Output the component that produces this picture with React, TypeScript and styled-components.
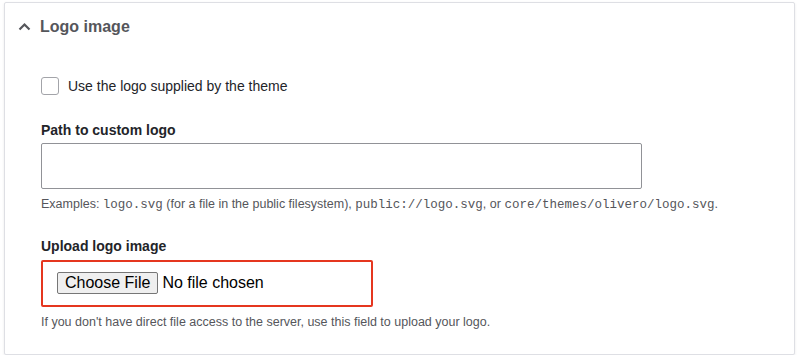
import React from "react";
import styled, { createGlobalStyle } from "styled-components";

const GlobalStyle = createGlobalStyle`
  body {
    margin: 0;
    background: #ffffff;
    font-family: "Liberation Sans", Arial, sans-serif;
    color: #232429;
  }
`;

const Page = styled.div`
  padding: 2px 5px 0 4px;
`;

const Panel = styled.section`
  border: 1px solid #dedfe4;
  border-radius: 2px;
  background: #ffffff;
  box-shadow: 0 1px 3px rgba(0, 0, 0, 0.08);
`;

const Summary = styled.div`
  display: flex;
  align-items: center;
  gap: 9px;
  height: 47px;
  padding-left: 13px;
  color: #55565b;
  font-size: 16px;
  font-weight: 700;
`;

const Content = styled.div`
  padding: 0 36px 24px;
`;

const CheckRow = styled.label`
  display: flex;
  align-items: center;
  gap: 9px;
  margin-top: 27px;
  height: 18px;
  font-size: 14px;
  color: #232429;
`;

const CheckBox = styled.span`
  width: 18px;
  height: 18px;
  box-sizing: border-box;
  border: 1px solid #a3a4a9;
  border-radius: 3px;
  background: #ffffff;
`;

const FormItem = styled.div<{ $top: number }>`
  margin-top: ${(p) => p.$top}px;
`;

const Label = styled.div<{ $gap: number }>`
  font-size: 14px;
  font-weight: 700;
  line-height: 18px;
  margin-bottom: ${(p) => p.$gap}px;
  color: #232429;
`;

const TextInput = styled.input`
  display: block;
  width: 601px;
  height: 46px;
  box-sizing: border-box;
  border: 1px solid #919297;
  border-radius: 2px;
  padding: 0 12px;
  font-size: 16px;
  font-family: inherit;
  outline: none;
`;

const FileInput = styled.input`
  display: block;
  width: 332px;
  height: 47px;
  box-sizing: border-box;
  border: 2px solid #e5361f;
  border-radius: 2px;
  padding: 10px 14px;
  font-size: 16px;
  font-family: "Liberation Sans", Arial, sans-serif;
  color: #000000;

  &::file-selector-button {
    font-family: inherit;
    font-size: 16px;
    margin-right: 4px;
    padding: 1px 7px;
    border: 1px solid #767676;
    border-radius: 2px;
    background: #efefef;
    color: #000000;
  }
`;

const Help = styled.div`
  margin-top: 7px;
  font-size: 12.5px;
  line-height: 16px;
  color: #55565b;
`;

const Code = styled.code`
  font-family: "Liberation Mono", "Courier New", monospace;
  font-size: 12.5px;
`;

const Chevron = () => (
  <svg width="13" height="9" viewBox="0 0 13 9">
    <polyline
      points="1.5,7.5 6.5,2.5 11.5,7.5"
      fill="none"
      stroke="#55565b"
      strokeWidth="2.2"
    />
  </svg>
);

export default function App() {
  return (
    <Page>
      <GlobalStyle />
      <Panel>
        <Summary>
          <Chevron />
          Logo image
        </Summary>
        <Content>
          <CheckRow>
            <CheckBox />
            Use the logo supplied by the theme
          </CheckRow>

          <FormItem $top={26}>
            <Label $gap={4}>Path to custom logo</Label>
            <TextInput type="text" />
            <Help>
              Examples: <Code>logo.svg</Code> (for a file in the public filesystem),{" "}
              <Code>public://logo.svg</Code>, or <Code>core/themes/olivero/logo.svg</Code>.
            </Help>
          </FormItem>

          <FormItem $top={24}>
            <Label $gap={5}>Upload logo image</Label>
            <FileInput type="file" />
            <Help>
              If you don't have direct file access to the server, use this field to upload your logo.
            </Help>
          </FormItem>
        </Content>
      </Panel>
    </Page>
  );
}
